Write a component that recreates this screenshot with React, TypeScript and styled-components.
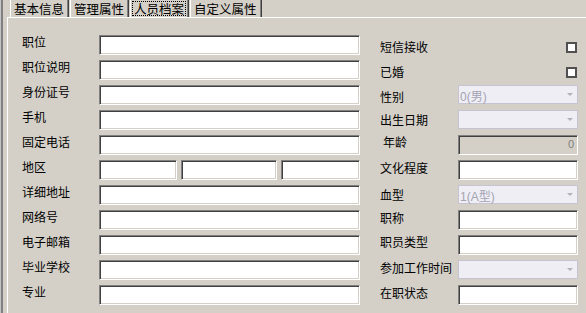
import React from 'react'
import styled, { createGlobalStyle } from 'styled-components'

const face = '#d4d0c8'

const GlobalStyle = createGlobalStyle`
  html, body {
    margin: 0;
    padding: 0;
    background: ${face};
  }
  body {
    font-family: 'Noto Sans CJK SC', 'Liberation Sans', sans-serif;
    font-size: 12px;
    color: #000;
  }
`

const Window = styled.div`
  display: flex;
  width: 586px;
  height: 313px;
  overflow: hidden;
  background: ${face};
`

const Rail = styled.div`
  width: 2px;
  flex-shrink: 0;
  border-left: 1px solid #c4c4c4;
  background: #808080;
  margin-right: 4px;
`

const Main = styled.div`
  display: flex;
  flex-direction: column;
  flex: 1;
`

const TabStrip = styled.div`
  display: flex;
  height: 17px;
  padding-left: 3px;
  gap: 1px;
`

const Tab = styled.div`
  display: flex;
  align-items: center;
  height: 17px;
  line-height: 17px;
  font-size: 12.5px;
  padding: 0 4px 0 3px;
  border-left: 1px solid #fff;
  border-right: 1px solid #404040;
  box-shadow: inset -1px 0 #808080;
  white-space: nowrap;
`

const TabText = styled.span<{ $focus?: boolean }>`
  display: inline-block;
  height: 13px;
  line-height: 13px;
  padding: 0 1px;
  margin: 0 -1px;
  outline: ${p => (p.$focus ? '1px dotted #000' : 'none')};
`

const Panel = styled.div`
  flex: 1;
  display: flex;
  gap: 20px;
  border-top: 1px solid #fff;
  border-left: 1px solid #fff;
  padding: 17px 0 0 14px;
`

const Column = styled.div<{ $label: number; $control: number }>`
  display: grid;
  grid-template-columns: ${p => p.$label}px ${p => p.$control}px;
  grid-auto-rows: 20px;
  row-gap: 5px;
`

const Label = styled.div<{ $offset?: number; $indent?: number }>`
  align-self: start;
  line-height: 12px;
  padding-top: ${p => p.$offset ?? 1}px;
  padding-left: ${p => p.$indent ?? 0}px;
  white-space: nowrap;
`

const Field = styled.div<{ $readOnly?: boolean }>`
  box-sizing: border-box;
  height: 20px;
  background: ${p => (p.$readOnly ? face : '#fff')};
  border-style: solid;
  border-width: 1px;
  border-color: #808080 #fff #fff #808080;
  box-shadow: inset 1px 1px #404040, inset -1px -1px ${face};
  color: #808080;
  font-family: 'Liberation Sans', sans-serif;
  font-size: 11px;
  line-height: 17px;
  text-align: right;
  padding-right: 3px;
`

const RegionGroup = styled.div`
  display: grid;
  grid-template-columns: 78px 96px 79px;
  column-gap: 4px;
`

const Select = styled.div`
  box-sizing: border-box;
  height: 19px;
  align-self: start;
  display: flex;
  align-items: center;
  justify-content: space-between;
  border: 1px solid #c6c3d3;
  background: #efeef5;
  color: #a4a3b2;
  font-family: 'Liberation Sans', 'Noto Sans CJK SC', sans-serif;
  font-size: 12px;
  padding: 2px 0 0 1px;
`

const Arrow = styled.span`
  width: 0;
  height: 0;
  border-left: 3px solid transparent;
  border-right: 3px solid transparent;
  border-top: 3px solid #b2b1bd;
  margin: -2px 4px 0 0;
`

const Check = styled.div`
  box-sizing: border-box;
  width: 11px;
  height: 11px;
  justify-self: end;
  align-self: start;
  margin: 7px 1px 0 0;
  border: 2px solid #505050;
  background: #fff;
`

const leftLabels = [
  '职位',
  '职位说明',
  '身份证号',
  '手机',
  '固定电话',
  '地区',
  '详细地址',
  '网络号',
  '电子邮箱',
  '毕业学校',
  '专业',
]

type RightRow = {
  label: string
  kind: 'check' | 'select' | 'field' | 'number'
  offset: number
  indent?: number
  value?: string
}

const rightRows: RightRow[] = [
  { label: '短信接收', kind: 'check', offset: 6 },
  { label: '已婚', kind: 'check', offset: 6 },
  { label: '性别', kind: 'select', offset: 6, value: '0(男)' },
  { label: '出生日期', kind: 'select', offset: 4 },
  { label: '年龄', kind: 'number', offset: 1, indent: 3, value: '0' },
  { label: '文化程度', kind: 'field', offset: 2 },
  { label: '血型', kind: 'select', offset: 4, value: '1(A型)' },
  { label: '职称', kind: 'field', offset: 2 },
  { label: '职员类型', kind: 'field', offset: 1 },
  { label: '参加工作时间', kind: 'select', offset: 2 },
  { label: '在职状态', kind: 'field', offset: 2 },
]

const tabs = ['基本信息', '管理属性', '人员档案', '自定义属性']

const renderControl = (row: RightRow) => {
  switch (row.kind) {
    case 'check':
      return <Check />
    case 'select':
      return (
        <Select>
          <span>{row.value}</span>
          <Arrow />
        </Select>
      )
    case 'number':
      return <Field $readOnly>{row.value}</Field>
    default:
      return <Field />
  }
}

const App: React.FC = () => (
  <>
    <GlobalStyle />
    <Window>
      <Rail />
      <Main>
        <TabStrip>
          {tabs.map((t, i) => (
            <Tab key={t}>
              <TabText $focus={i === 2}>{t}</TabText>
            </Tab>
          ))}
        </TabStrip>
        <Panel>
          <Column $label={77} $control={261}>
            {leftLabels.map(l => (
              <React.Fragment key={l}>
                <Label>{l}</Label>
                {l === '地区' ? (
                  <RegionGroup>
                    <Field />
                    <Field />
                    <Field />
                  </RegionGroup>
                ) : (
                  <Field />
                )}
              </React.Fragment>
            ))}
          </Column>
          <Column $label={78} $control={120}>
            {rightRows.map(r => (
              <React.Fragment key={r.label}>
                <Label $offset={r.offset} $indent={r.indent}>
                  {r.label}
                </Label>
                {renderControl(r)}
              </React.Fragment>
            ))}
          </Column>
        </Panel>
      </Main>
    </Window>
  </>
)

export default App
